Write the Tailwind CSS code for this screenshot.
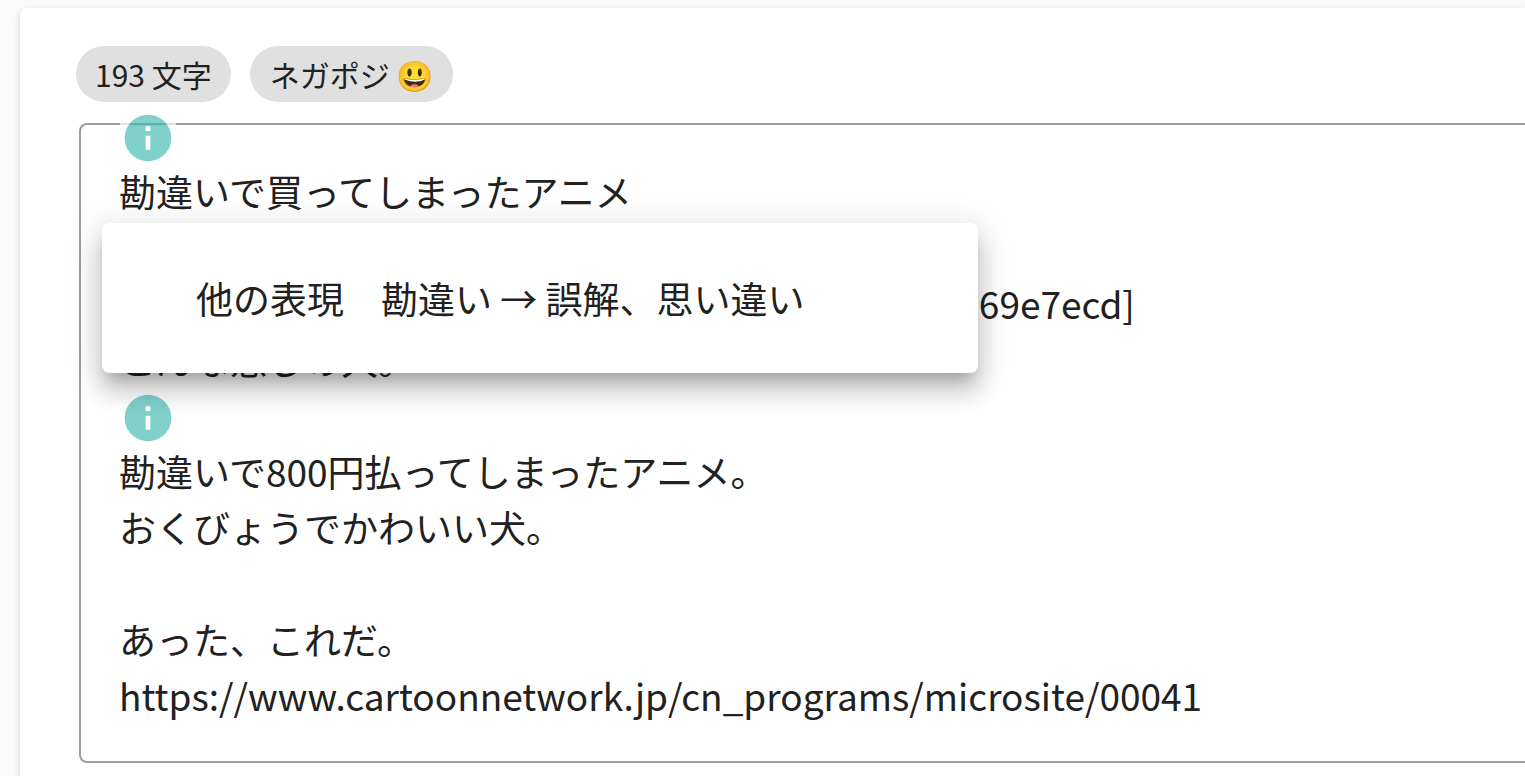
<!DOCTYPE html>
<html lang="ja">
<head>
    <meta charset="UTF-8">
    <meta name="viewport" content="width=device-width, initial-scale=1.0">
    <title>文章チェック</title>
    <script src="https://cdn.jsdelivr.net/npm/@tailwindcss/browser@4"></script>
</head>
<body class="h-screen overflow-hidden bg-[#fafafa] pl-5 pt-2 font-['Noto_Sans_CJK_JP',sans-serif] text-[#212121]">

    <!-- Editor card -->
    <main class="min-h-screen rounded-tl-lg bg-white pl-14 pt-[38px] shadow-[0_2px_7px_rgba(0,0,0,0.12),0_2px_2px_rgba(0,0,0,0.08)]">

        <!-- Summary chips -->
        <div class="flex gap-[19px] text-[30px] leading-[56px]">
            <span class="rounded-full bg-[#e0e0e0] px-[19px]">193 文字</span>
            <span class="rounded-full bg-[#e0e0e0] px-5">ネガポジ 😃</span>
        </div>

        <!-- Text field -->
        <div class="relative ml-[3px] mt-[21px] rounded-l-lg border-2 border-r-0 border-[#9e9e9e]">
            <textarea aria-label="本文" rows="10" spellcheck="false" class="block w-full resize-none overflow-hidden bg-transparent pb-[38px] pl-[38px] pt-[38px] text-[37px] leading-[56px] outline-none">勘違いで買ってしまったアニメ

[https://gyazo.com/4b1d8e02c6a7e935d0b84c1e269e7ecd]
こんな感じの犬。

勘違いで800円払ってしまったアニメ。
おくびょうでかわいい犬。

あった、これだ。
https://www.cartoonnetwork.jp/cn_programs/microsite/00041</textarea>

            <!-- Hint markers above the flagged lines -->
            <button type="button" aria-label="他の表現を表示" class="absolute left-[39px] top-[-15px] size-14 bg-white/70">
                <svg class="size-14" viewBox="0 0 24 24">
                    <circle cx="12" cy="12" r="10" fill="#80d1cc"/>
                    <path fill="#5fb0ab" d="M4.2 5.6h15.6v0.9H4.2z"/>
                    <path fill="#fff" d="M11 7h2v2h-2zM11 11h2v6h-2z"/>
                </svg>
            </button>
            <button type="button" aria-label="他の表現を表示" class="absolute left-[39px] top-[265px] size-14">
                <svg class="size-14" viewBox="0 0 24 24">
                    <circle cx="12" cy="12" r="10" fill="#80d1cc"/>
                    <path fill="#fff" d="M11 7h2v2h-2zM11 11h2v6h-2z"/>
                </svg>
            </button>

            <!-- Suggestion popover -->
            <div role="dialog" aria-label="他の表現" class="absolute left-[21px] top-[98px] w-[876px] rounded-lg bg-white px-[94px] py-[47px] text-[37px] leading-[56px] shadow-[0_12px_14px_-7px_rgba(0,0,0,0.2),0_19px_23px_2px_rgba(0,0,0,0.14),0_7px_33px_5px_rgba(0,0,0,0.12)]">
                <p>他の表現　勘違い → 誤解、思い違い</p>
            </div>
        </div>
    </main>

</body>
</html>
